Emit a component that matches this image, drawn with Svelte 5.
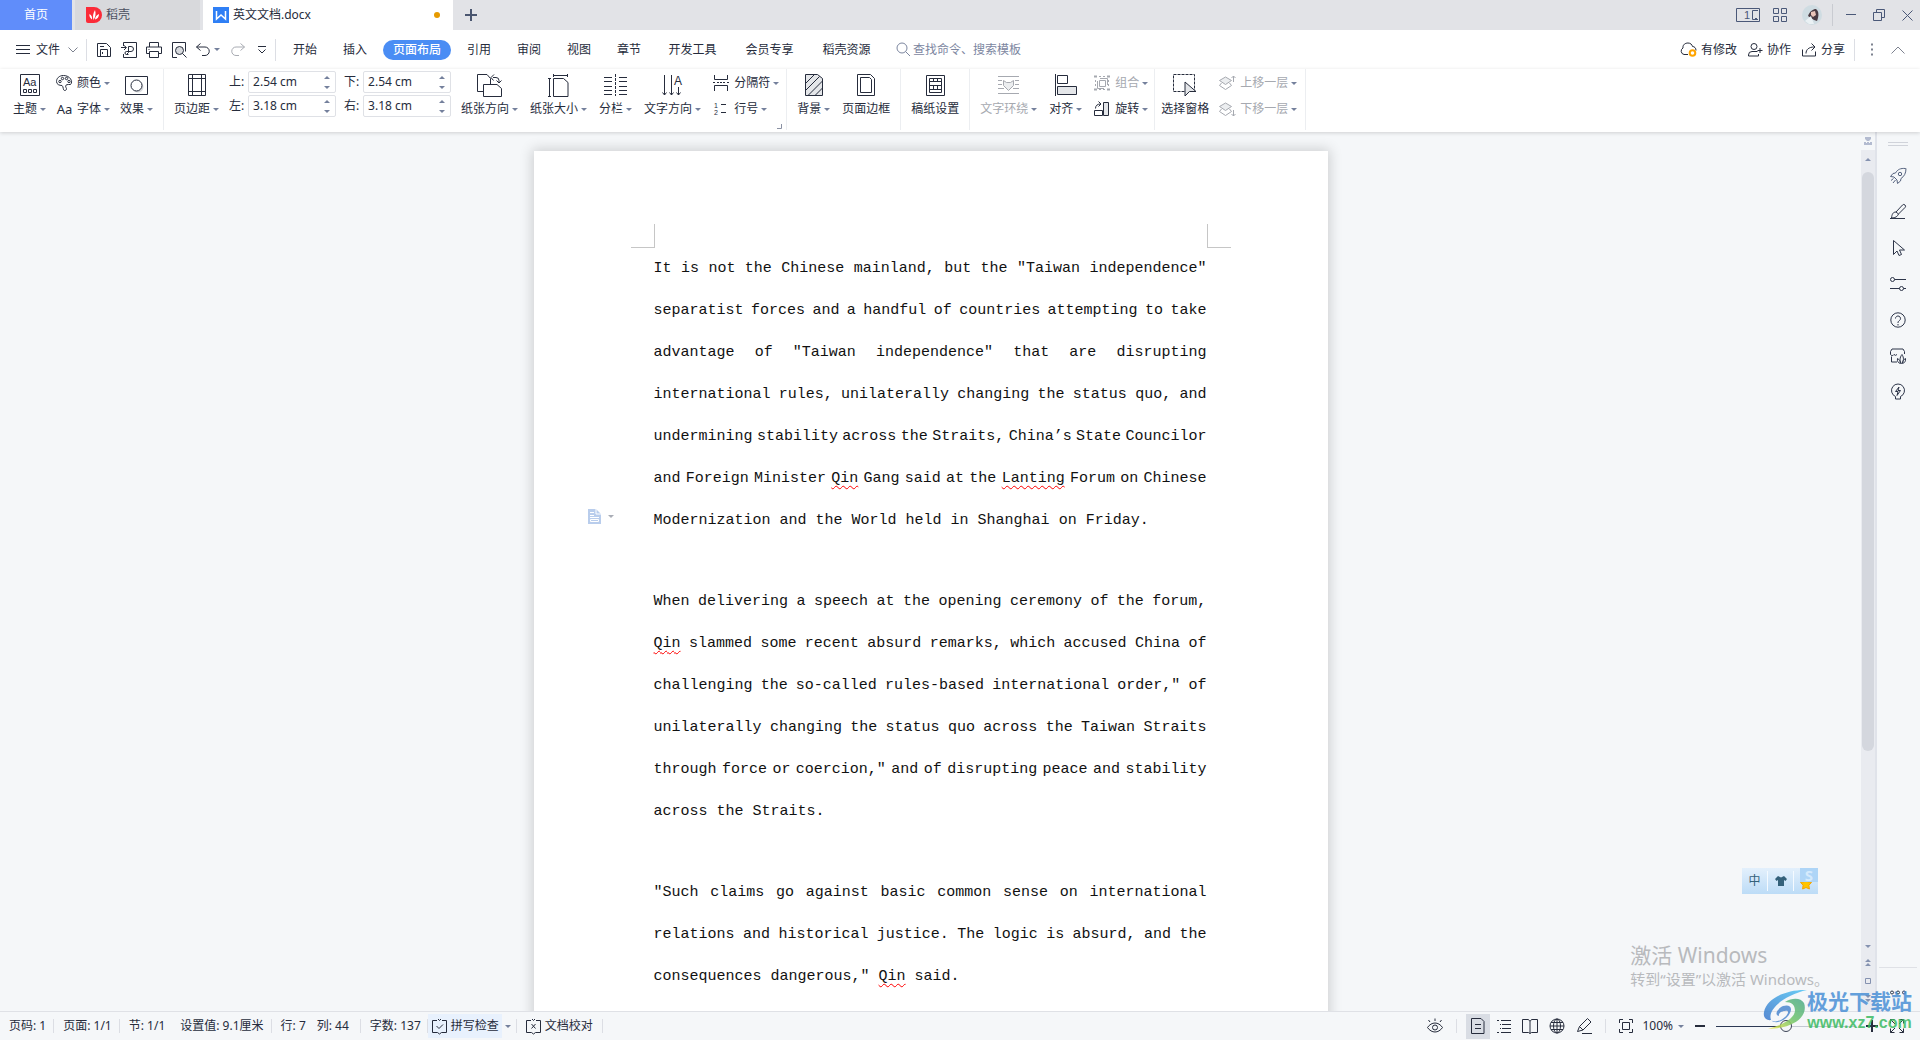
<script>
const icons = {
  menu: [14, 12, '<path d="M0 1.5h14M0 5.5h14M0 9.5h14"/>'],
  down: [10, 6, '<path d="M.5 .5l4.5 4.5 4.5-4.5"/>'],
  save: [16, 16, '<path d="M1.5 1.5h9l4 4v9h-13zM4.500 14v-6.500h7V14M4 4.500h4M6.500 10v2"/>'],
  export: [16, 16, '<path d="M2.500 4V.5h13v15h-13V12M0 5.500h5M3 3.500l2.500 2L3 8M5.500 12.500l2-2M7.500 10.500V4.500h2.500a2 2 0 0 1 0 5H5.500a1.500 1.500 0 0 0 0 3h2"/>'],
  print: [16, 16, '<path d="M3.500 5V.5h9V5M3.500 11.500h-3v-6.500h15v6.500h-3M3.500 9.500h9v6h-9zM2.500 7.500h1"/>'],
  preview: [16, 16, '<path d="M6 15.500H1.500V.5h13v9"/><circle cx="8.500" cy="8.500" r="4" fill="#d8dade"/><path d="M11.500 11.500l4 4"/>'],
  undo: [14, 13, '<path d="M4.500 .5l-4 3.500 4 3.500M.5 4H9a4 4 0 0 1 0 8.500H6"/>'],
  redo: [14, 13, '<path d="M9.500 .5l4 3.500-4 3.500M13.500 4H5a4 4 0 0 0 0 8.500h3"/>'],
  more: [8, 8, '<path d="M0 .5h8M.5 3.500l3.500 3.500 3.500-3.500"/>'],
  search: [15, 15, '<circle cx="6" cy="6" r="5"/><path d="M9.500 9.500l4.500 4.500"/>'],
  cloud: [17, 15, '<path d="M8 12.500H4a3.500 3.500 0 0 1-1-6.500C2.500 2.500 5.500 1 8 1s4 1.500 4.500 3.500c2 0 3.500 1.500 3.500 4"/><circle cx="12.500" cy="11" r="2.800" stroke="#ffa400" stroke-width="2"/>'],
  person: [15, 14, '<circle cx="6" cy="3.500" r="3"/><path d="M9.500 8.500H4a3.500 3.500 0 0 0-3.500 3.500v1h10v-2M9.500 7.500h5M12 5v5"/>'],
  share: [15, 14, '<path d="M.5 6.500v6.500h13V8.500M4 10.500c0-4 3-6.500 8-6.500M9.500 .5l3.500 3.500-3.500 3.500"/>'],
  dots: [3, 13, '<path d="M1 .5v2M1 5.500v2M1 10.500v2" stroke-width="2"/>'],
  up: [14, 8, '<path d="M.5 7.500L7 1l6.500 6.500"/>'],
  reader: [24, 14, '<path d="M.5 .5h23v13H.5z"/><path d="M22 2.500h-5.500v9H22M19 10.500h2"/><text x="8" y="11" font-size="11" fill="currentColor" stroke="none">1</text>'],
  grid: [14, 14, '<path d="M.5 .5h5v5h-5zM8.500 .5h5v5h-5zM.5 8.500h5v5h-5zM8.500 8.500h5v5h-5z"/>'],
  min: [10, 10, '<path d="M0 4.500h10"/>'],
  restore: [12, 12, '<path d="M.5 3.500h8v8h-8zM3.500 3V.5h8v8H9"/>'],
  close: [11, 11, '<path d="M.5 .5l10 10M10.500 .5l-10 10"/>'],
  theme: [20, 22, '<path d="M.5 .5h19v21H.5z"/><text x="3" y="12" font-size="11" fill="currentColor" stroke="none">Aa</text><path d="M3.500 15.500h3v3h-3zM8.500 15.500h3v3h-3zM13.500 15.500h3v3h-3z"/>'],
  palette: [17, 16, '<path d="M8.500 15.500c2 0 2.500-1.500 1.500-3-1-2 0-3 2.500-3h2c3-3-.5-9-7-9-4.500 0-7 3-7 6s3 4 5.500 4c1.500 1 1 5 2.500 5z"/><circle cx="4" cy="6.500" r="1.200"/><circle cx="6.500" cy="3.500" r="1.200"/><circle cx="10.500" cy="3.500" r="1.200"/><circle cx="13" cy="6.500" r="1.200"/>'],
  effect: [23, 19, '<circle cx="13" cy="11" r="5.500" fill="#d8dade" stroke="none"/><path d="M.5 .5h22v18H.5z"/><circle cx="11.500" cy="9.500" r="5.500" fill="#fff"/>'],
  margin: [18, 22, '<path d="M.5 .5h17v21H.5zM4.500 0v22M13.500 0v22M0 4.500h18M0 17.500h18"/>'],
  orient: [25, 23, '<path d="M7 17.500H.5V.5H10l3.500 4V10M6.500 10.500H20l4.500 4v8h-18zM16 3.500h3a3 3 0 0 1 3 3V9M17 .5l-3 3 2.500 3M19.500 6.500l2.500 2.500 2.500-2.500"/>'],
  size: [21, 23, '<path d="M5.500 4.500h10l4.500 4v14H5.500zM5.500 1.500h14M5.500 0v3M19.500 0v3M1.500 4.500v18M0 4.500h3M0 22.500h3"/>'],
  columns: [23, 22, '<path d="M0 3.500h8M0 7.500h8M0 12.500h8M0 16.500h8M0 20.500h8M15 3.500h8M15 7.500h8M15 12.500h8M15 16.500h8M15 20.500h8"/><path d="M11.500 0v22" stroke-dasharray="3 1"/>'],
  textdir: [21, 22, '<path d="M2.500 1v20M.5 18.500l2 2.500 2-2.500M9.500 1v20M7.500 18.500l2 2.500 2-2.500M16.500 13v8M14.500 18.500l2 2.500 2-2.500"/><text x="12" y="11" font-size="12" fill="currentColor" stroke="none">A</text>'],
  breaks: [17, 16, '<path d="M1.500 0v4.500h13V0M1.500 16v-5.500h13V16M0 7.500h2M4 7.500h2M7 7.500h2M10 7.500h2M14 7.500h2"/>'],
  lines: [17, 16, '<text x="1" y="6.500" font-size="7" fill="currentColor" stroke="none">1</text><text x="1" y="14.400" font-size="7" fill="currentColor" stroke="none">2</text><path d="M8 3.500h5M8 11.500h5"/>'],
  back: [18, 22, '<path d="M.5 .5h12l5 4v17H.5z" fill="#e4e6e9"/><path d="M.5 9.500l9-9M.5 16.500l14-14M3.500 21l14-14M10.500 21l7-7"/>'],
  border: [18, 22, '<path d="M.5 .5h13l4 4v17H.5z"/><path d="M3.500 3.500h9l2 2v13h-11z"/>'],
  grids: [19, 21, '<path d="M.5 .5h18v20H.5z"/><path d="M3.500 3.500h12v14h-12z"/><path d="M4 6.500h11M4 10.500h11M4 14.500h11M7.500 3.500v3M11.500 3.500v3M7.500 10.500v4M11.500 10.500v4"/>'],
  wrap: [21, 18, '<path d="M0 .5h21M0 17.500h21M0 4.500h4M17 4.500h4M0 8.500h4M17 8.500h4M0 12.500h6M15 12.500h6"/><path d="M5.500 4.500l3 2h4l3-2v5l-5 5-5-5z" fill="#eceef0"/>'],
  align: [22, 22, '<path d="M.5 0v22M2.500 1.500h10v8h-10z"/><path d="M2.500 12.500h19v8h-19z" fill="#e4e6e9"/>'],
  group: [17, 16, '<path d="M6 3.500h7.500V10M3.500 6v7.500H10"/><path d="M5.500 5.500h6v6h-6z"/><path d="M0 1.500h3M13 1.500h3M0 14.500h3M13 14.500h3" stroke-width="2"/><path d="M5 1.500h7M5 14.500h7M1.500 5v7M14.500 5v7" stroke-dasharray="2 2"/>'],
  rotate: [17, 16, '<path d="M.5 9.500h8v5h-8z"/><path d="M9.500 1.500h5v13h-5z" fill="#e4e6e9"/><path d="M1.500 7.500c0-3 2-4.500 5-4.500M4.500 .5L7 3 4.500 5.500"/>'],
  select: [24, 23, '<path d="M.5 .5h21v17H.5z" stroke-dasharray="3 1"/><path d="M12 8v14l4.500-4.500h6.500z" fill="#e4e6e9"/>'],
  forward: [17, 16, '<path d="M.5 5.500L6.500 2l6 3.500-6 4z" fill="#eceef0"/><path d="M2.500 8l-2 2.500 6 4 6-4-2-2.500M14.500 1v6M12.500 3l2-2 2 2"/>'],
  backward: [17, 16, '<path d="M.5 5.500L6.500 2l6 3.500-6 4z" fill="#eceef0"/><path d="M2.500 8l-2 2.500 6 4 6-4-2-2.500M14.500 9v6M12.500 13l2 2 2-2"/>'],
  rocket: [16, 16, '<path d="M15.500 .5c-5-.5-8 1-10 4.500L3 5.500.5 8.500l3.500.5 3 3 .5 3.500 3-2.500.5-2.500c3-2 5-5 5-10z"/><circle cx="10" cy="6" r="1.700"/><path d="M3.500 10.500l-2.500 2M5.500 12l-2.500 3"/>'],
  brush: [16, 16, '<path d="M0 14.500h15M6 8l6.500-7a1.500 1.500 0 0 1 2.500 2.500L8.500 10M6 8C3 8 2 10 1.500 14c4 0 6-1.500 7-4z"/>'],
  pointer: [16, 16, '<path d="M3.500 .5v14l3.500-3.500 2 4.500 2.500-1-2-4.500h5z"/>'],
  sliders: [16, 16, '<circle cx="2.500" cy="3.500" r="2"/><circle cx="11.500" cy="12.500" r="2"/><path d="M4.500 3.500H16M0 12.500h9.500M13.500 12.500H16"/>'],
  help: [16, 16, '<circle cx="8" cy="8" r="7.200"/><path d="M5.500 6.500a2.500 2.500 0 1 1 4 2c-1 .8-1.500 1-1.500 2.500M8 12v1.500"/>'],
  shop: [16, 16, '<path d="M14.500 6V3.500L13 1H2L.5 3.500v3a2 2 0 0 0 3.500 0 2 2 0 0 0 3 0M1.500 8.500v5.500H7"/><path d="M11.500 15.500c-2-2-2-6 .5-9 2 3 2 7-.5 9zM10.500 15.500C8 15 7 13 7.500 10.500c2 1 3 3 3 5zM12.500 15.500c0-2.500 1-4 3-5 .5 2.500-1 4.500-3 5z"/>'],
  bulb: [16, 16, '<path d="M5.500 12.500a6.500 6.500 0 1 1 5 0v2.500h-5z"/><path d="M9 3L5.500 7.500H8L7 11.500l3.500-5H8z"/>'],
  spell: [15, 16, '<path d="M5 2.500H.5v12h5l2 1.500 2-1.500h5v-12H10M6 1l1.500 1.500L9 1M4.500 8l2.500 2.500 4-4"/>'],
  proof: [15, 16, '<path d="M5 2.500H.5v12h5l2 1.500 2-1.500h5v-12H10M6 1l1.500 1.500L9 1M5.500 6l4 4.500M9.500 6l-4 4.500"/>'],
  eye: [16, 16, '<path d="M.5 9.500c4-6 11-6 15 0-4 6-11 6-15 0zM8 3V.5M3 4L1.500 2M13 4l1.500-2"/><circle cx="8" cy="9.500" r="2.500"/>'],
  page: [14, 16, '<path d="M.5 .5h9.500l3 3v12H.5zM4 6.500h6M4 10.500h6"/>'],
  outline: [14, 14, '<path d="M0 1.500h2M4 1.500h10M3 5.500h1M5 5.500h9M3 9.500h1M5 9.500h9M0 13.500h2M4 13.500h10"/>'],
  book: [16, 15, '<path d="M8 2.500L6.500 .5h-6v13h6L8 14.500l1.500-1h6V.5h-6zM8 2.500v12"/>'],
  globe: [16, 16, '<circle cx="8" cy="8" r="7"/><ellipse cx="8" cy="8" rx="3.500" ry="7"/><path d="M8 1v14M1 8h14M2 4.500h12M2 11.500h12"/>'],
  pen: [16, 16, '<path d="M1.500 13.500l2-5 8-8 3.500 3.500-8 8zM3.500 8.500L7 12M6 15.500h10"/>'],
  fit: [14, 14, '<path d="M.5 4V.5H4M10 .5h3.500V4M13.500 10v3.500H10M4 13.500H.5V10M3.500 3.500h7v7h-7z"/>'],
  full: [14, 14, '<path d="M.5 4.500V.5h4M9.500 .5h4v4M13.500 9.500v4h-4M4.500 13.500h-4v-4M.5 .5L5 5M13.500 .5L9 5M13.500 13.500L9 9M.5 13.500L5 9"/>'],
  minus: [10, 10, '<path d="M0 5h10" stroke-width="2"/>'],
  plus: [12, 12, '<path d="M0 6h12M6 0v12" stroke-width="2"/>'],
  sideDots: [16, 5, '<circle cx="2" cy="2.500" r="1.500"/><circle cx="8" cy="2.500" r="1.500"/><circle cx="14" cy="2.500" r="1.500"/>'],
  ruler: [8, 9, '<path d="M1 0h6v2L5 4H3L1 2zM0 5h2v1h1V5h2v1h1V5h2v3H0z" fill="#b3bbd0" stroke="none"/>'],
  triUp: [6, 3, '<path d="M0 3l3-3 3 3z" fill="currentColor" stroke="none"/>'],
  triDown: [6, 3, '<path d="M0 0l3 3 3-3z" fill="currentColor" stroke="none"/>'],
  pageUp: [6, 8, '<path d="M0 3l3-3 3 3zM0 7l3-3 3 3z" fill="currentColor" stroke="none"/>'],
  pageDown: [6, 8, '<path d="M0 0l3 3 3-3zM0 4l3 3 3-3z" fill="currentColor" stroke="none"/>'],
  browse: [6, 6, '<path d="M.5 .5h5v5h-5z"/>'],
  corner: [5, 5, '<path d="M4.500 0v4.500H0"/>'],
  writer: [16, 16, '<path d="M0 0h16v16H0z" fill="#2f7ff5" stroke="none"/><path d="M3.500 4v8l4.500-4 4.500 4V4" stroke="#fff" stroke-width="1.500"/>'],
  docer: [16, 16, '<path d="M0 0h8a8 8 0 0 1 0 16H2a2 2 0 0 1-2-2z" fill="#fb2b38" stroke="none"/><path d="M7.500 13c-1-3-.5-7 1.500-10 1 3 .8 7-1.500 10zM6 12.500C4 11 3 9 3.500 7 5.500 8 6.500 10 6 12.500zM9 12.500c0-2.500 1.500-4.500 4-5.500 0 3-1.500 5-4 5.500z" fill="#fff" stroke="none"/>'],
  paste: [13, 15, '<path d="M0 0h8l5 5v10H0z" fill="#b9cdec" stroke="none"/><path d="M8 0v5h5M2 3.500h4M2 6.500h4M2 8.500h9M2.500 10.500h8v2h-8z" stroke="#fff"/>'],
  shirt: [12, 10, '<path d="M3 0l3 1.500L9 0l3 3-1.500 2L9 4v6H3V4L1.500 5 0 3z" fill="#34617a" stroke="none"/>'],
  star: [12, 12, '<path d="M6 .5l1.800 3.300 3.700.7-2.600 2.700.5 3.800L6 9.500 2.600 11l.5-3.800L.5 4.500l3.700-.7z" fill="#ffc400" stroke="#f5a400"/>'],
}

const quick = ['save', 'export', 'print', 'preview']
const menus = ['开始', '插入', '页面布局', '引用', '审阅', '视图', '章节', '开发工具', '会员专享', '稻壳资源']
const sideTools = ['rocket', 'brush', 'pointer', 'sliders', 'help', 'shop', 'bulb']
const misspelled = ['Qin', 'Lanting']

const paragraphs = [
  [
    'It is not the Chinese mainland, but the "Taiwan independence"',
    'separatist forces and a handful of countries attempting to take',
    'advantage of "Taiwan independence" that are disrupting',
    'international rules, unilaterally changing the status quo, and',
    'undermining stability across the Straits, China’s State Councilor',
    'and Foreign Minister Qin Gang said at the Lanting Forum on Chinese',
    'Modernization and the World held in Shanghai on Friday.',
  ],
  [
    'When delivering a speech at the opening ceremony of the forum,',
    'Qin slammed some recent absurd remarks, which accused China of',
    'challenging the so-called rules-based international order," of',
    'unilaterally changing the status quo across the Taiwan Straits',
    'through force or coercion," and of disrupting peace and stability',
    'across the Straits.',
  ],
  [
    '"Such claims go against basic common sense on international',
    'relations and historical justice. The logic is absurd, and the',
    'consequences dangerous," Qin said.',
  ],
]

let activeMenu = $state('页面布局')
let margins = $state({ top: '2.54 cm', bottom: '2.54 cm', left: '3.18 cm', right: '3.18 cm' })
let zoom = $state(100)
</script>

{#snippet icon(name)}
  {@const [w, h, body] = icons[name]}
  <svg width={w} height={h} viewBox="0 0 {w} {h}" fill="none" stroke="currentColor" aria-hidden="true">{@html body}</svg>
{/snippet}

{#snippet arrow()}
  <span class="arrow">{@render icon('triDown')}</span>
{/snippet}

{#snippet big(name, label, drop = true, off = false)}
  <button class="big" disabled={off}>
    <span class="big-icon">{@render icon(name)}</span>
    <span class="row">{label}{#if drop}{@render arrow()}{/if}</span>
  </button>
{/snippet}

{#snippet small(name, label, off = false)}
  <button class="small" disabled={off}>
    {#if name === 'font'}<span class="aa">Aa</span>{:else}{@render icon(name)}{/if}
    <span class="row">{label}{@render arrow()}</span>
  </button>
{/snippet}

{#snippet field(id, label)}
  <div class="field">
    <label for="margin-{id}">{label}:</label>
    <div class="spin">
      <input id="margin-{id}" type="text" bind:value={margins[id]} />
      <span class="steps">{@render icon('triUp')}{@render icon('triDown')}</span>
    </div>
  </div>
{/snippet}

<div class="app">
  <header class="tabs">
    <button class="home">首页</button>
    <button class="tab docer">{@render icon('docer')}稻壳</button>
    <button class="tab current">{@render icon('writer')}英文文档.docx<i class="unsaved"></i></button>
    <button class="new" aria-label="新建">{@render icon('plus')}</button>
    <div class="window">
      <button aria-label="阅读">{@render icon('reader')}</button>
      <button aria-label="应用">{@render icon('grid')}</button>
      <svg class="avatar" width="20" height="20" viewBox="0 0 20 20" aria-hidden="true">
        <circle cx="10" cy="10" r="10" fill="#cfdce2" />
        <path d="M6 11c2-5 5-7 8-7 3 2 3 7 1 12l-3-1z" fill="#4a3b42" />
        <path d="M9 7l4-1 1 4-3 2-2-2z" fill="#eac4b8" />
        <path d="M3 16l6-5 3 8-5 0z" fill="#eaf1f4" />
      </svg>
      <span class="line"></span>
      <button aria-label="最小化">{@render icon('min')}</button>
      <button aria-label="还原">{@render icon('restore')}</button>
      <button aria-label="关闭">{@render icon('close')}</button>
    </div>
  </header>

  <nav class="menu">
    <button class="file">{@render icon('menu')}文件<span class="muted">{@render icon('down')}</span></button>
    <span class="line"></span>
    <div class="quick">
      {#each quick as name}
        <button aria-label={name}>{@render icon(name)}</button>
      {/each}
      <button class="undo" aria-label="撤销">{@render icon('undo')}{@render arrow()}</button>
      <button class="faint" aria-label="恢复">{@render icon('redo')}</button>
      <button class="more" aria-label="更多">{@render icon('more')}</button>
    </div>
    <span class="line"></span>
    <div class="menus">
      {#each menus as item}
        <button class:wide={item.length > 2} class:active={activeMenu === item} onclick={() => (activeMenu = item)}>{item}</button>
      {/each}
    </div>
    <button class="find">{@render icon('search')}查找命令、搜索模板</button>
    <div class="share">
      <button>{@render icon('cloud')}有修改</button>
      <button>{@render icon('person')}协作</button>
      <button>{@render icon('share')}分享</button>
      <span class="line"></span>
      <button class="muted" aria-label="选项">{@render icon('dots')}</button>
      <button class="muted fold" aria-label="折叠">{@render icon('up')}</button>
    </div>
  </nav>

  <section class="ribbon">
    <div class="group first">
      {@render big('theme', '主题')}
      <div class="stack">
        {@render small('palette', '颜色')}
        {@render small('font', '字体')}
      </div>
      {@render big('effect', '效果')}
    </div>
    <div class="group setup">
      {@render big('margin', '页边距')}
      <div class="fields">
        {@render field('top', '上')}
        {@render field('bottom', '下')}
        {@render field('left', '左')}
        {@render field('right', '右')}
      </div>
      <div class="inner">
        {@render big('orient', '纸张方向')}
        {@render big('size', '纸张大小')}
        {@render big('columns', '分栏')}
        {@render big('textdir', '文字方向')}
        <div class="stack">
          {@render small('breaks', '分隔符')}
          {@render small('lines', '行号')}
        </div>
      </div>
      <button class="launch" aria-label="页面设置">{@render icon('corner')}</button>
    </div>
    <div class="group">
      <div class="inner">
        {@render big('back', '背景')}
        {@render big('border', '页面边框', false)}
      </div>
    </div>
    <div class="group">
      {@render big('grids', '稿纸设置', false)}
    </div>
    <div class="group tight">
      <div class="inner">
        {@render big('wrap', '文字环绕', true, true)}
        {@render big('align', '对齐')}
        <div class="stack">
          {@render small('group', '组合', true)}
          {@render small('rotate', '旋转')}
        </div>
      </div>
    </div>
    <div class="group last">
      {@render big('select', '选择窗格', false)}
      <div class="stack">
        {@render small('forward', '上移一层', true)}
        {@render small('backward', '下移一层', true)}
      </div>
    </div>
  </section>

  <main>
    <div class="canvas">
      <article class="page">
        <span class="crop left"></span>
        <span class="crop right"></span>
        <button class="para-tool" aria-label="段落">{@render icon('paste')}{@render icon('triDown')}</button>
        {#each paragraphs as lines}
          <div class="para">
            {#each lines as line, i}
              <p class:end={i === lines.length - 1}>
                {#each line.split(' ') as word}
                  <span class:wrong={misspelled.includes(word)}>{word}</span>
                {/each}
              </p>
            {/each}
          </div>
        {/each}
      </article>
      <div class="activate">
        <p class="big-note">激活 Windows</p>
        <p>转到“设置”以激活 Windows。</p>
      </div>
      <div class="ime">
        <span>中</span>
        <span>{@render icon('shirt')}</span>
        <span class="star"><b>S</b>{@render icon('star')}</span>
      </div>
    </div>
    <div class="scroll">
      <div class="ruler">{@render icon('ruler')}</div>
      <div class="track">
        {@render icon('triUp')}
        <div class="rail"><div class="thumb"></div></div>
        {@render icon('triDown')}
        {@render icon('pageUp')}
        {@render icon('browse')}
        {@render icon('pageDown')}
      </div>
    </div>
    <aside>
      <span class="grip"></span>
      {#each sideTools as name}
        <button aria-label={name}>{@render icon(name)}</button>
      {/each}
      <div class="side-end">{@render icon('sideDots')}</div>
    </aside>
  </main>

  <footer>
    <span class="cell">页码: 1</span>
    <span class="cell">页面: 1/1</span>
    <span class="cell section"><span>节: 1/1</span><span>设置值: 9.1厘米</span></span>
    <span class="cell position"><span>行: 7</span><span>列: 44</span></span>
    <span class="cell words">字数: 137</span>
    <button class="spell">{@render icon('spell')}拼写检查</button>
    <span class="cell drop">{@render arrow()}</span>
    <button class="cell proof">{@render icon('proof')}文档校对</button>
    <div class="views">
      <button aria-label="护眼模式">{@render icon('eye')}</button>
      <span class="line"></span>
      <button class="on" aria-label="页面视图">{@render icon('page')}</button>
      <button aria-label="大纲">{@render icon('outline')}</button>
      <button aria-label="阅读版式">{@render icon('book')}</button>
      <button aria-label="Web版式">{@render icon('globe')}</button>
      <button aria-label="写作模式">{@render icon('pen')}</button>
      <span class="line"></span>
      <button aria-label="最佳显示">{@render icon('fit')}</button>
      <button class="percent">{zoom}%{@render arrow()}</button>
      <button aria-label="缩小">{@render icon('minus')}</button>
      <input type="range" min="10" max="190" bind:value={zoom} aria-label="缩放" />
      <button aria-label="放大">{@render icon('plus')}</button>
      <button class="full" aria-label="全屏">{@render icon('full')}</button>
    </div>
  </footer>

  <div class="brand">
    <svg width="44" height="42" viewBox="0 0 44 42" aria-hidden="true">
      <defs>
        <linearGradient id="blue" x1="0" y1="1" x2="1" y2="0">
          <stop offset="0" stop-color="#3c78cc" />
          <stop offset="1" stop-color="#52c6f5" />
        </linearGradient>
        <linearGradient id="green" x1="0" y1="1" x2="1" y2="0">
          <stop offset="0" stop-color="#f2e84a" />
          <stop offset=".5" stop-color="#6fc46a" />
          <stop offset="1" stop-color="#4aa98c" />
        </linearGradient>
      </defs>
      <path d="M44 1C26 0 4 8 1 23c-1 5 2 9 7 8C4 20 22 6 44 1z" fill="url(#blue)" />
      <path d="M8 31c3 3 10 1 14-3s4-7 0-6c-4 0-7 3-6 5-5-1-2-7 4-10 6-2 10 1 7 7C23 32 12 36 8 31z" fill="#4d88cf" />
      <path d="M22 13c8-5 16-4 19 1 4 11-6 25-36 26 14-4 26-10 27-18 0-6-3-9-10-9z" fill="url(#green)" />
    </svg>
    <div>
      <p class="brand-name">极光下载站</p>
      <p class="brand-url">www.xz7.com</p>
    </div>
  </div>
</div>

<style>
:global(body) {
  margin: 0;
  font-family: "Noto Sans", "Noto Sans CJK SC", sans-serif;
  font-size: 12px;
  line-height: 16px;
  color: #262c3c;
}

.app {
  position: relative;
  display: flex;
  flex-direction: column;
  height: 100vh;
  overflow: hidden;
  background: #fff;
}

button, input {
  font: inherit;
  color: inherit;
  border: none;
  background: none;
  padding: 0;
  margin: 0;
}

button {
  display: flex;
  align-items: center;
  white-space: nowrap;
  cursor: pointer;
}

p {
  margin: 0;
}

svg {
  display: block;
  flex: none;
  overflow: visible;
  font-family: "Liberation Sans", sans-serif;
}

.line {
  width: 1px;
  height: 22px;
  background: #dcdee4;
}

.row {
  display: flex;
  align-items: center;
}

.arrow {
  color: #74809c;
  margin-left: 3px;
}

.tabs {
  display: flex;
  flex: none;
  height: 30px;
  background: #e2e3e7;
}

.home {
  width: 72px;
  justify-content: center;
  background: #608dfa;
  color: #fff;
  margin-right: 3px;
}

.tab {
  gap: 4px;
  padding: 0 11px;
  box-sizing: border-box;
}

.docer {
  width: 125px;
  background: #d8d9dc;
  color: #4b5060;
  margin-right: 3px;
}

.current {
  width: 250px;
  padding: 0 13px 0 10px;
  background: #fff;
}

.unsaved {
  width: 6px;
  height: 6px;
  border-radius: 50%;
  background: #e69a00;
  margin-left: auto;
}

.new {
  padding: 0 12px;
  color: #4a5670;
}

.window {
  display: flex;
  align-items: center;
  gap: 13px;
  margin-left: auto;
  padding-right: 7px;
  color: #4a5878;
}

.window button:nth-of-type(n + 4) {
  margin-left: 4px;
}

.window .avatar {
  margin-left: 2px;
}

.window .line {
  margin-left: -3px;
  background: #c9cbd1;
}

.menu {
  display: flex;
  flex: none;
  align-items: center;
  height: 39px;
}

.file {
  gap: 6px;
  padding-left: 16px;
  margin-right: 8px;
}

.muted {
  color: #7d828f;
}

.file .muted {
  margin-left: 2px;
}

.quick {
  display: flex;
  align-items: center;
  gap: 9px;
  padding: 0 9px;
}

.undo .arrow {
  margin-left: 4px;
}

.faint {
  color: #a9acb3;
  margin-left: 2px;
}

.more {
  margin: 0 0 0 4px;
}

.menus {
  display: flex;
  padding-left: 4px;
}

.menus button {
  justify-content: center;
  width: 50px;
  height: 20px;
  border-radius: 10px;
}

.menus .wide {
  width: 77px;
}

.menus .active {
  width: 68px;
  margin: 0 3px;
  background: #4a8df4;
  color: #fff;
  font-weight: 500;
}

.find {
  gap: 2px;
  margin-left: 11px;
  color: #7c869f;
}

.share {
  display: flex;
  align-items: center;
  gap: 11px;
  margin-left: auto;
  padding-right: 15px;
}

.share button {
  gap: 4px;
}

.share .line {
  margin: 0 5px 0 -2px;
}

.share .fold {
  margin-left: 6px;
}

.ribbon {
  display: flex;
  flex: none;
  height: 63px;
  position: relative;
  z-index: 1;
  background: #fff;
  box-shadow: 0 1px 4px rgba(0, 0, 0, 0.16);
}

.group {
  position: relative;
  display: flex;
  gap: 10px;
  padding: 2px 10px 0;
  height: 59px;
  border-right: 1px solid #eceef1;
}

.group.first {
  padding-left: 13px;
}

.group.setup {
  padding-right: 7px;
}

.group.tight {
  padding-right: 6px;
}

.group.last {
  padding-left: 6px;
  padding-right: 8px;
}

.inner {
  display: flex;
  gap: 12px;
}

.big {
  flex-direction: column;
}

.big-icon {
  display: flex;
  align-items: center;
  justify-content: center;
  height: 28px;
  margin-bottom: 2px;
}

.big, .small {
  height: min-content;
}

.big:disabled, .small:disabled {
  color: #a6a9b0;
}

.stack {
  display: flex;
  flex-direction: column;
  gap: 10px;
  padding-top: 4px;
}

.small {
  gap: 4px;
}

.aa {
  width: 17px;
  font-size: 13px;
}

.fields {
  display: grid;
  grid-template-columns: auto auto;
  gap: 2px 8px;
  height: min-content;
}

.field {
  display: flex;
  align-items: center;
  gap: 3px;
}

.field label {
  width: 16px;
}

.spin {
  display: flex;
  align-items: center;
  box-sizing: border-box;
  width: 88px;
  height: 22px;
  border: 1px solid #dfe1e6;
  border-radius: 2px;
}

.spin input {
  flex: 1;
  min-width: 0;
  padding-left: 4px;
}

.steps {
  display: flex;
  flex-direction: column;
  gap: 7px;
  padding-right: 5px;
  color: #74809c;
}

.launch {
  position: absolute;
  right: 4px;
  bottom: 1px;
  color: #8a91a3;
}

main {
  display: flex;
  flex: 1;
  min-height: 0;
  background: #f5f7f9;
}

.canvas {
  position: relative;
  flex: 1;
  display: flex;
  justify-content: center;
  overflow: hidden;
}

.page {
  position: relative;
  flex: none;
  box-sizing: border-box;
  width: 794px;
  height: 1123px;
  margin-top: 19px;
  padding: 97px 121px 0 120px;
  background: #fff;
  box-shadow: 0 0 12px 2px rgba(0, 0, 0, 0.16);
}

.para {
  margin-bottom: 39px;
}

.para p {
  display: flex;
  justify-content: space-between;
  line-height: 42px;
  font-family: "Liberation Mono", "Noto Sans CJK SC", monospace;
  font-size: 15px;
  color: #111;
  white-space: nowrap;
}

.para .end {
  justify-content: flex-start;
  gap: 9px;
}

.wrong {
  text-decoration: underline wavy #f00 1px;
  text-underline-offset: 3px;
}

.crop {
  position: absolute;
  top: 73px;
  width: 23px;
  height: 23px;
  border-bottom: 1px solid #c6c6c6;
}

.crop.left {
  left: 97px;
  border-right: 1px solid #c6c6c6;
}

.crop.right {
  right: 97px;
  border-left: 1px solid #c6c6c6;
}

.para-tool {
  position: absolute;
  left: 54px;
  top: 358px;
  gap: 7px;
  color: #a9adb6;
}

.activate {
  position: absolute;
  right: 32px;
  bottom: 20px;
  font-size: 15px;
  line-height: 24px;
  color: #b8babd;
}

.activate .big-note {
  font-size: 21px;
}

.ime {
  position: absolute;
  right: 43px;
  bottom: 117px;
  display: flex;
  align-items: center;
  height: 26px;
  background: linear-gradient(#e3f0fc, #bcdcf7);
  color: #34617a;
}

.ime > span {
  display: flex;
  align-items: center;
  justify-content: center;
  width: 25px;
  height: 20px;
}

.ime > span + span {
  border-left: 1px solid #f5faff;
}

.ime .star {
  position: relative;
  padding-top: 6px;
  height: 20px;
  box-sizing: border-box;
}

.ime b {
  position: absolute;
  right: 0;
  top: -3px;
  width: 18px;
  font-size: 15px;
  line-height: 14px;
  text-align: center;
  color: #d5eafc;
  background: #aed5f7;
}

.scroll {
  display: flex;
  flex-direction: column;
  width: 14px;
  border-right: 2px solid #e0e3ea;
}

.ruler {
  display: flex;
  align-items: center;
  justify-content: center;
  height: 18px;
}

.track {
  flex: 1;
  display: flex;
  flex-direction: column;
  align-items: center;
  gap: 11px;
  padding: 8px 0;
  background: #e9ebf0;
  color: #8592b0;
}

.rail {
  flex: 1;
  width: 12px;
}

.thumb {
  height: 76%;
  border-radius: 6px;
  background: #d4d7de;
}

aside {
  display: flex;
  flex-direction: column;
  align-items: center;
  gap: 20px;
  box-sizing: border-box;
  width: 43px;
  padding-right: 2px;
  color: #2d3549;
}

.grip {
  width: 20px;
  height: 2px;
  margin: 10px 0 0;
  border: solid #d0d3da;
  border-width: 1px 0;
}

.grip + button {
  margin-top: 2px;
  color: #56637f;
}

.side-end {
  width: 38px;
  box-sizing: border-box;
  margin-top: auto;
  padding: 22px 11px 16px;
  border-top: 1px solid #dfe1e6;
}

footer {
  display: flex;
  flex: none;
  align-items: center;
  height: 29px;
  box-sizing: border-box;
  border-top: 1px solid #dfe1e6;
  background: #f5f7f9;
  white-space: nowrap;
}

.cell {
  display: flex;
  align-items: center;
  height: 14px;
  padding: 0 7px 0 9px;
  border-right: 1px solid #dcdee4;
}

.section {
  gap: 15px;
}

.position {
  gap: 11px;
  padding-right: 11px;
}

.words {
  padding-right: 6px;
}

.spell {
  gap: 4px;
  height: 24px;
  padding: 0 3px 0 4px;
  background: #e8f1fd;
}

.drop {
  padding: 0 5px 0 0;
}

.proof {
  gap: 4px;
  padding-right: 9px;
}

.views {
  display: flex;
  align-items: center;
  gap: 11px;
  margin-left: auto;
  padding-right: 16px;
}

.views .line {
  height: 14px;
  margin: 0 2px;
}

.views .on {
  height: 25px;
  padding: 0 5px;
  margin: 0 -4px;
  background: #d9dde4;
}

.percent {
  margin-left: -2px;
}

.percent .arrow {
  margin-left: 5px;
}

input[type="range"] {
  appearance: none;
  width: 139px;
  height: 12px;
}

input[type="range"]::-webkit-slider-runnable-track {
  height: 1px;
  background: linear-gradient(to right, #2d3a55 50%, #c3c8d2 50%);
}

input[type="range"]::-webkit-slider-thumb {
  appearance: none;
  box-sizing: border-box;
  width: 12px;
  height: 12px;
  margin-top: -6px;
  border: 1px solid #3c4456;
  border-radius: 50%;
  background: #f5f7f9;
}

.full {
  margin-left: 1px;
}

.brand {
  position: absolute;
  right: 8px;
  bottom: 7px;
  z-index: 2;
  display: flex;
  opacity: 0.85;
  pointer-events: none;
}

.brand-name {
  font-size: 21px;
  line-height: 24px;
  font-weight: 700;
  color: #4a90d6;
}

.brand-url {
  font-family: "Liberation Sans", sans-serif;
  font-size: 16px;
  line-height: 20px;
  font-weight: 700;
  text-align: center;
  color: #3dbb63;
}
</style>
